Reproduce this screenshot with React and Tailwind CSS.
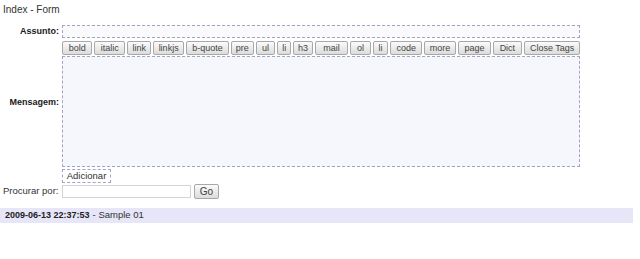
import React from 'react';

const tags = [
  { label: 'bold', w: 'w-[31px]' },
  { label: 'italic', w: 'w-[31px]' },
  { label: 'link', w: 'w-[25px]' },
  { label: 'linkjs', w: 'w-[31px]' },
  { label: 'b-quote', w: 'w-[44px]' },
  { label: 'pre', w: 'w-[23px]' },
  { label: 'ul', w: 'w-[20px]' },
  { label: 'li', w: 'w-[14px]' },
  { label: 'h3', w: 'w-[20px]' },
  { label: 'mail', w: 'w-[34px]' },
  { label: 'ol', w: 'w-[21px]' },
  { label: 'li', w: 'w-[16px]' },
  { label: 'code', w: 'w-[32px]' },
  { label: 'more', w: 'w-[33px]' },
  { label: 'page', w: 'w-[33px]' },
  { label: 'Dict', w: 'w-[30px]' },
  { label: 'Close Tags', w: 'w-[57px]' },
];

const btn =
  'flex items-center justify-center rounded-[2px] border border-[#a8a8a8] bg-gradient-to-b from-[#fbfbfb] to-[#dcdcdc] leading-none text-[#444] whitespace-nowrap';

export default function App() {
  return (
    <div className="w-[640px] h-[259px] bg-white text-[10px] text-[#333] font-['Liberation_Sans',Arial,sans-serif] overflow-hidden">
      <div className="pl-[3px] pt-[4px] h-[25px] leading-[12px]">Index - Form</div>

      <div className="grid grid-cols-[59px_518px] gap-x-[3px]">
        <div className="flex items-center justify-end h-[13px] text-[9px] font-bold text-[#1a1a1a]">Assunto:</div>
        <div className="h-[13px] border border-dashed border-[#a3a3c2] bg-[#fafafd]" />

        <div className="row-span-2 flex items-center justify-end text-[9px] font-bold text-[#1a1a1a]">Mensagem:</div>
        <div className="flex gap-[2px] mt-[3px] mb-[1px]">
          {tags.map((t, i) => (
            <div key={i} className={`${btn} h-[14px] text-[9px] ${t.w}`}>{t.label}</div>
          ))}
        </div>
        <div className="h-[111px] border border-dashed border-[#a3a3c2] bg-[#f6f7fc]" />

        <div />
        <div className="pt-[2px]">
          <div className="w-[49px] h-[14px] border border-dashed border-[#a3a3c2] flex items-center justify-center text-[9.5px] text-[#333]">
            Adicionar
          </div>
        </div>
      </div>

      <div className="flex items-center mt-[1px] h-[15px]">
        <div className="w-[62px] pl-[3px] whitespace-nowrap text-[9.5px]">Procurar por:</div>
        <div className="w-[129px] h-[13px] border border-[#d4d4d4] bg-white" />
        <div className={`${btn} w-[25px] h-[15px] ml-[3px] text-[10px]`}>Go</div>
      </div>

      <div className="mt-[9px] mr-[7px] h-[15px] bg-[#e6e6f8] flex items-center pl-[5px] text-[9px] text-[#222]">
        <span className="font-bold">2009-06-13 22:37:53</span>
        <span className="text-[9.5px] ml-[3px] text-[#333]">- Sample 01</span>
      </div>
    </div>
  );
}
